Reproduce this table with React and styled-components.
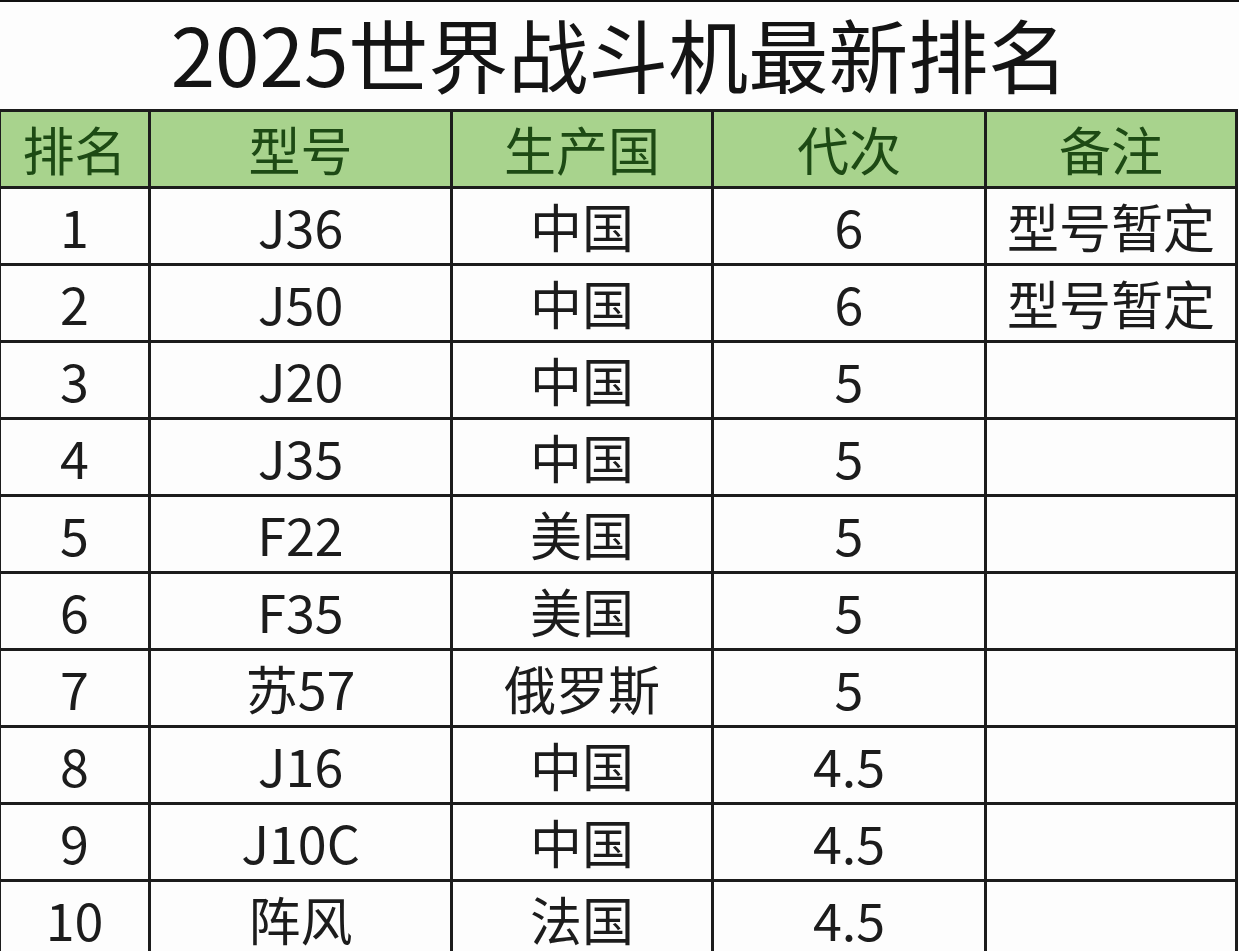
import React from 'react'
import styled, { createGlobalStyle } from 'styled-components'

const GlobalStyle = createGlobalStyle`
  html, body {
    margin: 0;
    padding: 0;
    background: #ffffff;
    overflow: hidden;
  }
  body {
    font-family: "Noto Sans CJK SC", "Noto Sans", sans-serif;
  }
`

const Page = styled.div`
  width: 1239px;
  height: 951px;
  overflow: hidden;
  background: #fdfdfd;
  border-top: 2px solid #111;
  box-sizing: border-box;
  display: flex;
  flex-direction: column;
`

const Title = styled.h1`
  margin: 0;
  flex-shrink: 0;
  height: 107px;
  display: flex;
  align-items: center;
  justify-content: center;
  padding-bottom: 8px;
  box-sizing: border-box;
  font-size: 80px;
  font-weight: 400;
  color: #141414;
  line-height: 1;
`

const Sheet = styled.table`
  flex-shrink: 0;
  border-collapse: collapse;
  table-layout: fixed;
  width: 1237px;
  margin-left: -2px;
`

const Col = styled.col`
  width: ${props => props.w}px;
`

const HeadCell = styled.th`
  height: 74px;
  padding: 0;
  background: #a8d38d;
  border: 3px solid #1c1c1c;
  color: #1d4a14;
  font-size: 52px;
  font-weight: 400;
  text-align: center;
  vertical-align: middle;
  line-height: 1;
`

const Cell = styled.td`
  height: 74px;
  padding: 0;
  border: 3px solid #1c1c1c;
  color: #1c1c1c;
  font-size: 52px;
  text-align: center;
  vertical-align: middle;
  line-height: 1;
  white-space: nowrap;
`

const cols = [150, 302, 261, 273, 251]
const heads = ['排名', '型号', '生产国', '代次', '备注']

const rows = [
  ['1', 'J36', '中国', '6', '型号暂定'],
  ['2', 'J50', '中国', '6', '型号暂定'],
  ['3', 'J20', '中国', '5', ''],
  ['4', 'J35', '中国', '5', ''],
  ['5', 'F22', '美国', '5', ''],
  ['6', 'F35', '美国', '5', ''],
  ['7', '苏57', '俄罗斯', '5', ''],
  ['8', 'J16', '中国', '4.5', ''],
  ['9', 'J10C', '中国', '4.5', ''],
  ['10', '阵风', '法国', '4.5', ''],
]

const App = () => (
  <Page>
    <GlobalStyle />
    <Title>2025世界战斗机最新排名</Title>
    <Sheet>
      <colgroup>
        {cols.map((w, i) => <Col key={i} w={w} />)}
      </colgroup>
      <thead>
        <tr>
          {heads.map(h => <HeadCell key={h}>{h}</HeadCell>)}
        </tr>
      </thead>
      <tbody>
        {rows.map(r => (
          <tr key={r[0]}>
            {r.map((c, i) => <Cell key={i}>{c}</Cell>)}
          </tr>
        ))}
      </tbody>
    </Sheet>
  </Page>
)

export default App
